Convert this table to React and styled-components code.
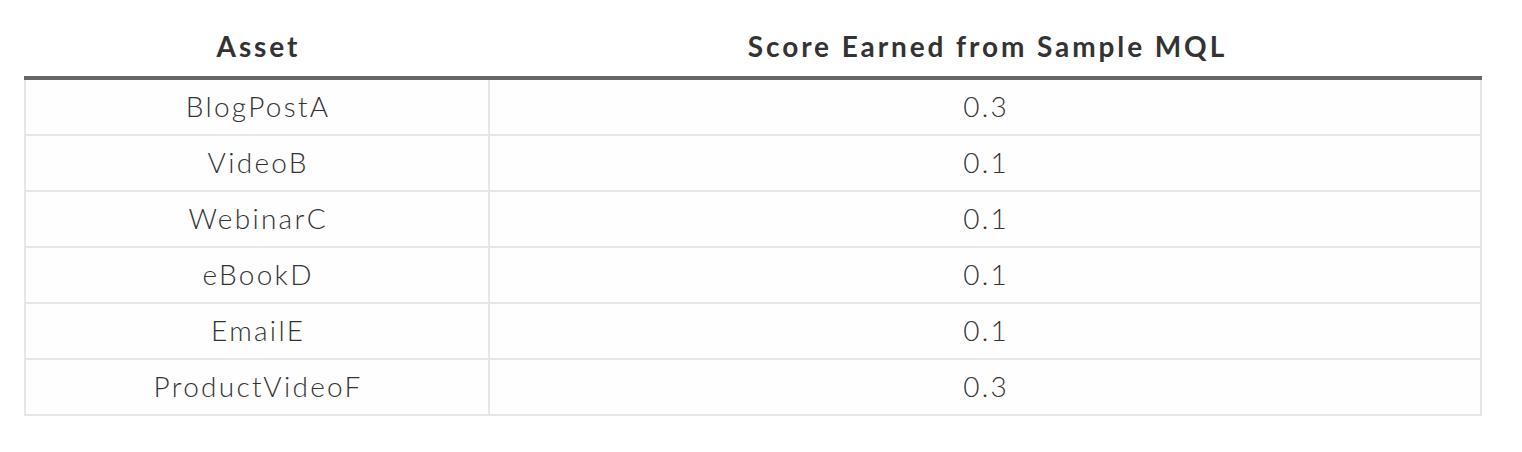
import React from "react";
import styled, { createGlobalStyle } from "styled-components";

const Global = createGlobalStyle`
  html, body { margin: 0; padding: 0; background: #ffffff; }
  body { font-family: Lato, "Open Sans", sans-serif; color: #333; }
`;

const Wrap = styled.div`
  padding: 0 40px 36px 24px;
`;

const Table = styled.table`
  width: 1458px;
  border-collapse: separate;
  border-spacing: 0;
  table-layout: fixed;
`;

const Th = styled.th`
  font-family: Lato, "Open Sans", sans-serif;
  font-weight: 700;
  font-size: 28px;
  line-height: 34px;
  letter-spacing: 2.9px;
  text-indent: 2.9px;
  color: #333;
  text-align: center;
  padding: 29px 0 13px 0;
  border-bottom: 4px solid #666;
  width: ${(p) => p.$w || "auto"};
  white-space: nowrap;
`;

const Td = styled.td`
  font-family: Lato, "Open Sans", sans-serif;
  font-weight: 300;
  font-size: 28px;
  line-height: 32px;
  letter-spacing: 2.3px;
  text-indent: 2.3px;
  color: #333;
  text-align: center;
  padding: 10px 0 12px 0;
  background: #fefefe;
  border-bottom: 2px solid #e6e6e6;
  border-right: 2px solid #e6e6e6;
  border-left: ${(p) => (p.$first ? "2px solid #e6e6e6" : "none")};
  white-space: nowrap;
`;

const rows = [
  ["BlogPostA", "0.3"],
  ["VideoB", "0.1"],
  ["WebinarC", "0.1"],
  ["eBookD", "0.1"],
  ["EmailE", "0.1"],
  ["ProductVideoF", "0.3"],
];

export default function App() {
  return (
    <>
      <Global />
      <Wrap>
        <Table>
          <thead>
            <tr>
              <Th $w="466px">Asset</Th>
              <Th>Score Earned from Sample MQL</Th>
            </tr>
          </thead>
          <tbody>
            {rows.map(([a, s]) => (
              <tr key={a}>
                <Td $first>{a}</Td>
                <Td>{s}</Td>
              </tr>
            ))}
          </tbody>
        </Table>
      </Wrap>
    </>
  );
}
